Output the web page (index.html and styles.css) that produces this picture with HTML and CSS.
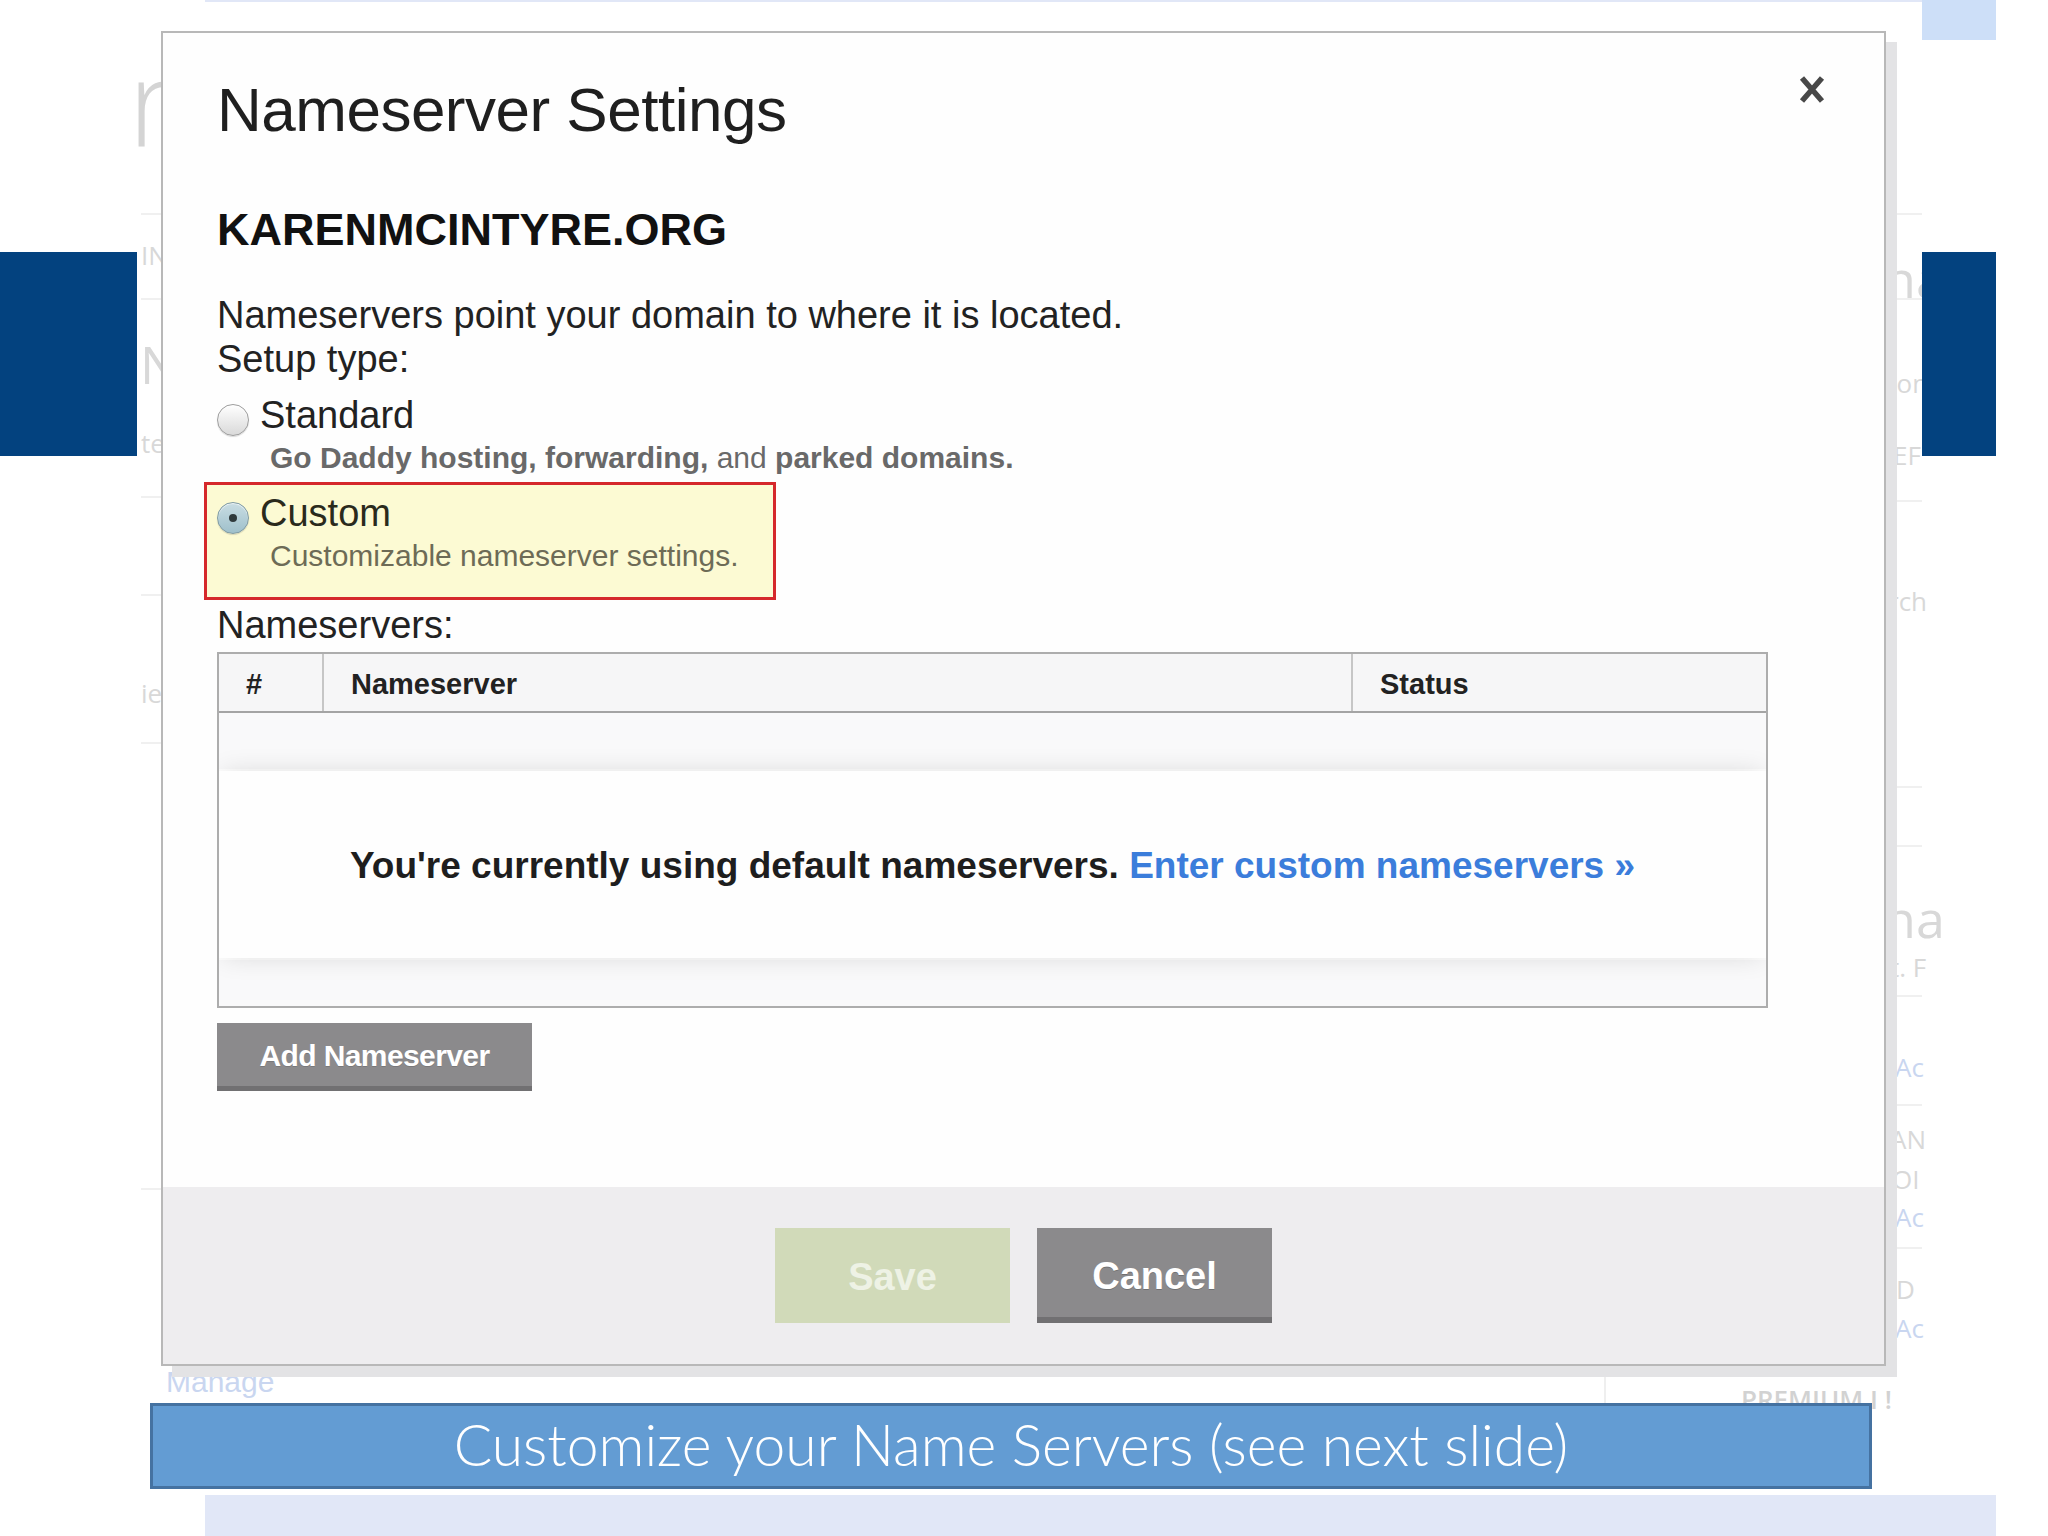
FILE: index.html
```html
<!DOCTYPE html>
<html>
<head>
    <link rel="stylesheet" href="styles.css">
</head>
<body>
    <div class="slide">
        <!-- faded page behind the dialog -->
        <div class="backdrop">
            <span class="ghost ghost-big" style="left:128px;top:40px">r</span>
            <span class="ghost" style="left:141px;top:240px">IN</span>
            <span class="ghost ghost-mid" style="left:140px;top:336px">NT</span>
            <span class="ghost" style="left:141px;top:428px">te</span>
            <span class="ghost" style="left:141px;top:678px">ie</span>
            <span class="ghost ghost-mid" style="left:1884px;top:250px">na</span>
            <span class="ghost" style="left:1890px;top:368px">ion</span>
            <span class="ghost" style="left:1893px;top:440px">EF</span>
            <span class="ghost" style="left:1888px;top:586px">rch</span>
            <span class="ghost ghost-mid" style="left:1884px;top:890px">ha</span>
            <span class="ghost" style="left:1890px;top:952px">t. F</span>
            <span class="ghost ghost-link" style="left:1895px;top:1052px">Ac</span>
            <span class="ghost" style="left:1890px;top:1124px">AN</span>
            <span class="ghost" style="left:1892px;top:1164px">OI</span>
            <span class="ghost ghost-link" style="left:1895px;top:1202px">Ac</span>
            <span class="ghost" style="left:1896px;top:1274px">D</span>
            <span class="ghost ghost-link" style="left:1895px;top:1313px">Ac</span>
            <span class="ghost ghost-premium" style="left:1741px;top:1384px">PREMIUM I !</span>
            <span class="ghost ghost-link ghost-manage" style="left:166px;top:1364px">Manage</span>
            <div class="ghost-line" style="left:141px;top:213px;width:20px"></div>
            <div class="ghost-line" style="left:141px;top:298px;width:20px"></div>
            <div class="ghost-line" style="left:141px;top:496px;width:20px"></div>
            <div class="ghost-line" style="left:141px;top:594px;width:20px"></div>
            <div class="ghost-line" style="left:141px;top:742px;width:20px"></div>
            <div class="ghost-line" style="left:141px;top:1188px;width:20px"></div>
            <div class="ghost-line" style="left:1897px;top:213px;width:25px"></div>
            <div class="ghost-line" style="left:1897px;top:298px;width:25px"></div>
            <div class="ghost-line" style="left:1897px;top:500px;width:25px"></div>
            <div class="ghost-line" style="left:1897px;top:786px;width:25px"></div>
            <div class="ghost-line" style="left:1897px;top:845px;width:25px"></div>
            <div class="ghost-line" style="left:1897px;top:995px;width:25px"></div>
            <div class="ghost-line" style="left:1897px;top:1104px;width:25px"></div>
            <div class="ghost-line" style="left:1897px;top:1247px;width:25px"></div>
            <div class="ghost-vline" style="left:1604px;top:1368px;height:36px"></div>
        </div>

        <div class="strip strip-top"></div>
        <div class="tab-top"></div>
        <div class="band band-left"></div>
        <div class="band band-right"></div>

        <div class="modal">
            <div class="modal-close">
                <svg width="28" height="31" viewBox="0 0 28 31">
                    <path d="M4 4 L24 27 M24 4 L4 27" stroke="#484848" stroke-width="5.5" fill="none"/>
                </svg>
            </div>

            <div class="modal-body">
                <h1 class="modal-title">Nameserver Settings</h1>
                <h2 class="domain">KARENMCINTYRE.ORG</h2>

                <p class="line">Nameservers point your domain to where it is located.</p>
                <p class="line">Setup type:</p>

                <div class="option">
                    <div class="option-row">
                        <span class="radio"></span>
                        <span class="option-label">Standard</span>
                    </div>
                    <div class="option-desc"><b>Go Daddy hosting, forwarding,</b> and <b>parked domains.</b></div>
                </div>

                <div class="option option-selected">
                    <div class="option-row">
                        <span class="radio radio-on"></span>
                        <span class="option-label">Custom</span>
                    </div>
                    <div class="option-desc">Customizable nameserver settings.</div>
                </div>

                <p class="line">Nameservers:</p>

                <div class="ns-table">
                    <div class="ns-head">
                        <div class="ns-cell">#</div>
                        <div class="ns-cell">Nameserver</div>
                        <div class="ns-cell">Status</div>
                    </div>
                    <div class="ns-row"></div>
                    <div class="ns-empty">
                        You're currently using default nameservers. <a class="ns-link">Enter custom nameservers »</a>
                    </div>
                    <div class="ns-row ns-row-last"></div>
                </div>

                <button class="btn btn-add">Add Nameserver</button>
            </div>

            <div class="modal-footer">
                <button class="btn btn-big btn-save">Save</button>
                <button class="btn btn-big btn-cancel">Cancel</button>
            </div>
        </div>

        <div class="caption">Customize your Name Servers (see next slide)</div>
        <div class="strip strip-bottom"></div>
    </div>
</body>
</html>
```

FILE: styles.css
```css
:root {
    --navy: #03427f;
    --grey-btn: #8b8a8c;
    --grey-btn-dark: #717072;
    --text: #222222;
}

body {
    margin: 0;
    padding: 0;
    background: #ffffff;
    font-family: "Liberation Sans", Arial, sans-serif;
    overflow: hidden;
}

.slide {
    position: relative;
    width: 2048px;
    height: 1536px;
    background: #ffffff;
}

/* slide decoration */
.strip {
    position: absolute;
    background: #e1e7f7;
}

.strip-top {
    left: 205px;
    top: 0;
    width: 1717px;
    height: 2px;
}

.strip-bottom {
    left: 205px;
    top: 1495px;
    width: 1791px;
    height: 41px;
}

.tab-top {
    position: absolute;
    left: 1922px;
    top: 0;
    width: 74px;
    height: 40px;
    background: #cddff8;
}

.band {
    position: absolute;
    top: 252px;
    height: 204px;
    background: var(--navy);
}

.band-left {
    left: 0;
    width: 137px;
}

.band-right {
    left: 1922px;
    width: 74px;
}

.backdrop {
    position: absolute;
    inset: 0;
    overflow: hidden;
}

.ghost {
    position: absolute;
    font-family: "Open Sans", "Liberation Sans", sans-serif;
    font-size: 26px;
    line-height: 30px;
    color: #d8d8d8;
    white-space: nowrap;
}

.ghost-big {
    font-size: 120px;
    line-height: 120px;
    color: #d4d4d4;
    font-weight: 300;
}

.ghost-mid {
    font-size: 52px;
    line-height: 56px;
}

.ghost-link {
    color: #c9d6f0;
}

.ghost-premium {
    font-weight: 600;
    color: #d2d2d2;
}

.ghost-manage {
    font-family: "Liberation Sans", sans-serif;
    font-size: 30px;
    line-height: 36px;
}

.ghost-line {
    position: absolute;
    height: 2px;
    background: #f0f0f0;
}

.ghost-vline {
    position: absolute;
    width: 2px;
    background: #efefef;
}

/* dialog */
.modal {
    position: absolute;
    left: 161px;
    top: 31px;
    width: 1725px;
    height: 1335px;
    box-sizing: border-box;
    border: 2px solid #b8b8b8;
    background: #fefefe;
    box-shadow: 11px 11px 0 #e3e3e5;
    display: flex;
    flex-direction: column;
}

.modal-close {
    position: absolute;
    top: 41px;
    right: 58px;
    width: 28px;
    height: 31px;
}

.modal-close svg {
    display: block;
}

.modal-body {
    flex: 1;
    padding: 41px 54px 0 54px;
    color: var(--text);
}

.modal-title {
    margin: 0;
    font-size: 62px;
    line-height: 72px;
    font-weight: normal;
    letter-spacing: -0.5px;
    color: #1f1f1f;
}

.domain {
    margin: 58px 0 0 0;
    font-size: 45px;
    line-height: 52px;
    font-weight: bold;
    color: #111111;
}

.line {
    margin: 0;
    font-size: 38px;
    line-height: 44px;
}

.domain + .line {
    margin-top: 37px;
}

.option {
    margin-top: 12px;
}

.option-row {
    display: flex;
    align-items: flex-start;
    gap: 11px;
    font-size: 38px;
    line-height: 44px;
}

.radio {
    flex: none;
    width: 30px;
    height: 30px;
    margin-top: 11px;
    border: 1px solid #9d9d9d;
    border-radius: 50%;
    background: linear-gradient(#ffffff, #d9d9d9);
    box-shadow: inset 0 1px 1px rgba(255, 255, 255, 0.8), 0 1px 1px rgba(0, 0, 0, 0.15);
    position: relative;
}

.radio-on {
    border-color: #7f9aa3;
    background: linear-gradient(#c9dde3, #9fc0cb);
}

.radio-on::after {
    content: "";
    position: absolute;
    left: 11px;
    top: 11px;
    width: 8px;
    height: 8px;
    border-radius: 50%;
    background: #2f3a3c;
}

.option-desc {
    padding-left: 53px;
    margin-top: 3px;
    font-size: 30px;
    line-height: 36px;
    color: #696969;
}

.option-desc b {
    font-weight: bold;
}

.option-selected {
    margin: 6px 0 0 -13px;
    width: 572px;
    box-sizing: border-box;
    padding: 6px 0 23px 10px;
    border: 3px solid #d5282b;
    background: #fcfad3;
}

.option-selected .option-label {
    color: #2a2a1c;
}

.option-selected .option-desc {
    color: #6d6b56;
}

.option-selected + .line {
    margin-top: 3px;
}

/* nameserver table */
.ns-table {
    margin-top: 5px;
    width: 1551px;
    box-sizing: border-box;
    border: 2px solid #adadad;
    background: #ffffff;
    overflow: hidden;
}

.ns-head {
    display: grid;
    grid-template-columns: 105px 1029px 1fr;
    height: 57px;
    background: #f6f6f7;
    border-bottom: 2px solid #a4a4a4;
}

.ns-cell {
    padding: 4px 0 0 27px;
    font-size: 29px;
    line-height: 53px;
    font-weight: bold;
    color: #222222;
    border-right: 2px solid #c6c6c6;
}

.ns-cell:last-child {
    border-right: none;
}

.ns-row {
    height: 56px;
    background: #f9f9fa;
}

.ns-row-last {
    height: 46px;
}

.ns-empty {
    position: relative;
    z-index: 1;
    height: 187px;
    margin: 2px 0;
    box-sizing: border-box;
    padding-top: 2px;
    background: #fefefe;
    box-shadow: 0 0 26px -4px rgba(0, 0, 0, 0.16);
    text-align: center;
    font-size: 37px;
    line-height: 185px;
    font-weight: bold;
    color: #1e1e1e;
}

.ns-link {
    color: #3b7ddb;
    cursor: pointer;
}

/* buttons */
.btn {
    font-family: "Liberation Sans", Arial, sans-serif;
    font-weight: bold;
    color: #ffffff;
    border: none;
    padding: 0;
    cursor: pointer;
}

.btn-add {
    display: block;
    margin-top: 15px;
    width: 315px;
    height: 68px;
    box-sizing: border-box;
    padding-top: 2px;
    background: var(--grey-btn);
    border-bottom: 5px solid var(--grey-btn-dark);
    font-size: 30px;
    letter-spacing: -0.6px;
    text-shadow: 0 1px 0 rgba(0, 0, 0, 0.15);
}

.modal-footer {
    height: 177px;
    flex: none;
    box-sizing: border-box;
    padding-top: 41px;
    background: #eeedef;
    display: flex;
    justify-content: center;
    align-items: flex-start;
    gap: 27px;
}

.btn-big {
    width: 235px;
    height: 95px;
    box-sizing: border-box;
    padding-top: 4px;
    font-size: 38px;
}

.btn-save {
    background: #d1dab9;
    color: #eef2e5;
}

.btn-cancel {
    background: var(--grey-btn);
    border-bottom: 6px solid var(--grey-btn-dark);
    padding-top: 8px;
    text-shadow: 0 1px 0 rgba(0, 0, 0, 0.2);
}

/* slide caption */
.caption {
    position: absolute;
    left: 150px;
    top: 1403px;
    width: 1722px;
    height: 86px;
    box-sizing: border-box;
    border: 3px solid #4572a1;
    background: #639cd3;
    color: #ffffff;
    font-family: Lato, "Open Sans", sans-serif;
    font-weight: 300;
    font-size: 57px;
    display: flex;
    align-items: center;
    justify-content: center;
    padding-bottom: 4px;
}
```
